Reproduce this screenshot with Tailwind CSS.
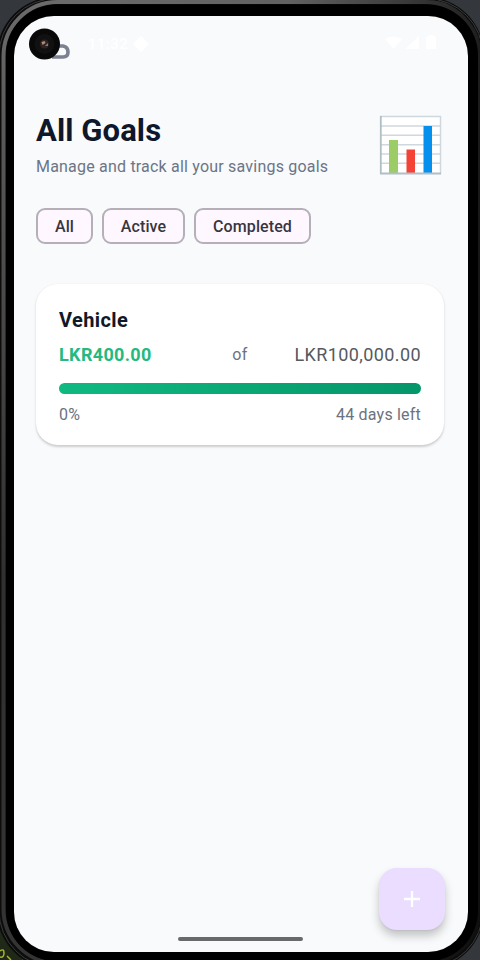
<!DOCTYPE html>
<html lang="en">
<head>
<meta charset="utf-8">
<title>All Goals</title>
<script src="https://cdn.jsdelivr.net/npm/@tailwindcss/browser@4"></script>
</head>
<body class="w-[480px] h-[960px] overflow-hidden bg-[#34383c] font-[Roboto,sans-serif]">
<div class="relative w-[480px] h-[960px] overflow-hidden">
  <svg class="absolute inset-0" width="480" height="960" viewBox="0 0 480 960" fill="none">
    <defs>
      <linearGradient id="rim" x1="0" y1="0" x2="0" y2="1"><stop offset="0" stop-color="#6c6c6c"/><stop offset=".12" stop-color="#5a5a5a"/><stop offset=".6" stop-color="#303030"/><stop offset="1" stop-color="#343434"/></linearGradient>
      <linearGradient id="fade" x1="0" y1="0" x2="1" y2="0"><stop offset="0" stop-color="#000" stop-opacity="0"/><stop offset=".6" stop-color="#000" stop-opacity=".1"/><stop offset="1" stop-color="#000" stop-opacity=".7"/></linearGradient>
    </defs>
    <path d="M0 930h22v30H0z" fill="#202818"/>
    <path d="M0 951q4-3 4 2t-4 4M7 956l4 4" stroke="#a5b52c" stroke-width="1.5"/>
    <rect x="-3" y="-3" width="487" height="972" rx="58" fill="#0c0c0c"/>
    <rect x="-1" y="-1.500" width="484" height="969" rx="57" stroke="#3a3a3a" stroke-width="1"/>
    <rect x="3.500" y="2" width="476" height="961" rx="54" stroke="url(#rim)" stroke-width="4"/>
    <rect x="3.500" y="2" width="476" height="961" rx="54" stroke="url(#fade)" stroke-width="4.500"/>
    <rect x="6" y="4.500" width="472" height="957" rx="51" fill="#000"/>
  </svg>
  <main class="absolute left-[14px] top-[16px] w-[454px] h-[936px] rounded-[40px] bg-[#f9fafc] overflow-hidden px-[22px]">
    <header class="h-[88px] pt-[18px] flex justify-between text-white">
      <div class="flex items-center h-[20px] pl-[52px] gap-[5px]">
        <span class="text-[15px] leading-5 font-medium tracking-[0.4px]">11:32</span>
        <svg width="16" height="16" viewBox="0 0 16 16" fill="currentColor"><path d="M8 0l8 8-8 8-8-8z"/></svg>
      </div>
      <svg class="mt-[1px] mr-[7px]" width="54" height="16" viewBox="0 0 54 16" fill="currentColor"><path d="M0 4q8-5 17 0L8.500 14zM20 14L34 1v13zM41 3q0-2 3-2V0h4v1q3 0 3 2v11H41z"/></svg>
    </header>
    <section class="flex justify-between h-[89px]">
      <div class="pt-[8px]">
        <h1 class="text-[31px] leading-[38px] font-bold tracking-[0.1px] text-[#0f172a] whitespace-nowrap">All Goals</h1>
        <p class="mt-[7px] text-[16px] leading-[20px] tracking-[0.2px] text-[#6b7585] whitespace-nowrap">Manage and track all your savings goals</p>
      </div>
      <svg class="mt-[11px] mr-[4px] shrink-0" width="63" height="60" viewBox="0 0 63 60">
        <path d="M1 1h61v58H1z" fill="#fff"/>
        <path d="M1 1.500h61M1 11h61M1 20.300h61M1 29.700h61M1 39h61M1 48.300h61M61.500 1v58" stroke="#cfd8dc" stroke-width="1.500"/>
        <path d="M1.800 1v58" stroke="#b0bec5" stroke-width="1.800"/>
        <path d="M10 25h9v33h-9z" fill="#9ccc65"/><path d="M27.500 34.500h8.500v24h-8.500z" fill="#f44336"/><path d="M44.500 11h8.500v47h-8.500z" fill="#0590ee"/>
        <path d="M1 58.500h61" stroke="#b0bec5" stroke-width="1.800"/>
      </svg>
    </section>
    <nav class="mt-[15px] flex gap-[9px] text-[16px] font-medium text-[#38353d]">
      <button class="w-[57px] h-[36px] rounded-[9px] border-2 border-[#b5b0b8] bg-[#fef7ff] pt-px">All</button>
      <button class="w-[83px] h-[36px] rounded-[9px] border-2 border-[#b5b0b8] bg-[#fef7ff] pt-px tracking-[0.1px]">Active</button>
      <button class="w-[117px] h-[36px] rounded-[9px] border-2 border-[#b5b0b8] bg-[#fef7ff] pt-px tracking-[0.1px]">Completed</button>
    </nav>
    <article class="mt-[40px] w-[408px] h-[161px] rounded-[22px] bg-white px-[23px] pt-[24px] shadow-[0_1.5px_2.5px_rgba(0,0,0,0.18)]">
      <h2 class="text-[20px] leading-[24px] font-bold tracking-[0.4px] text-[#111827]">Vehicle</h2>
      <div class="mt-[10px] grid grid-cols-[1fr_auto_1fr] items-center leading-[24px]">
        <span class="text-[18px] font-bold tracking-[0.35px] text-[#25b981]">LKR400.00</span>
        <span class="text-[16px] tracking-[0.4px] text-[#6b7280] pt-px">of</span>
        <span class="text-[18px] tracking-[0.4px] text-right text-[#565960]">LKR100,000.00</span>
      </div>
      <div class="mt-[16px] h-[11px] rounded-full bg-linear-to-r from-[#10b981] to-[#059669]"></div>
      <div class="mt-[9px] flex justify-between text-[16px] leading-[24px] tracking-[0.2px] text-[#6b7280]"><span>0%</span><span>44 days left</span></div>
    </article>
  </main>
  <svg class="absolute left-[28px] top-[28px]" width="46" height="34" viewBox="0 0 46 34" fill="none">
    <path d="M25 18h10q5 1 5 6t-5 5H24" stroke="#7b8190" stroke-width="3.600"/>
    <circle cx="16.500" cy="16" r="15.500" fill="#090909"/><circle cx="16.500" cy="16" r="10" fill="#111"/><circle cx="16.500" cy="16" r="4.500" fill="#2e2422"/><path d="M13.500 14l3-1 1 2-3 2z" fill="#b08c78"/><path d="M17 18l3-3v3z" fill="#8b7780"/>
  </svg>
  <button class="absolute left-[379px] top-[868px] w-[66px] h-[62px] rounded-[18px] bg-[#eaddff] flex items-center justify-center shadow-[0_6px_10px_rgba(0,0,0,0.22),0_1px_2px_rgba(0,0,0,0.06)]" aria-label="Add goal">
    <svg width="18" height="18" viewBox="0 0 18 18" stroke="#fff" stroke-width="2.300"><path d="M9 1v16M1 9h16"/></svg>
  </button>
  <div class="absolute left-[178px] top-[937px] w-[125px] h-[4px] rounded-full bg-[#68696b]"></div>
</div>
</body>
</html>
